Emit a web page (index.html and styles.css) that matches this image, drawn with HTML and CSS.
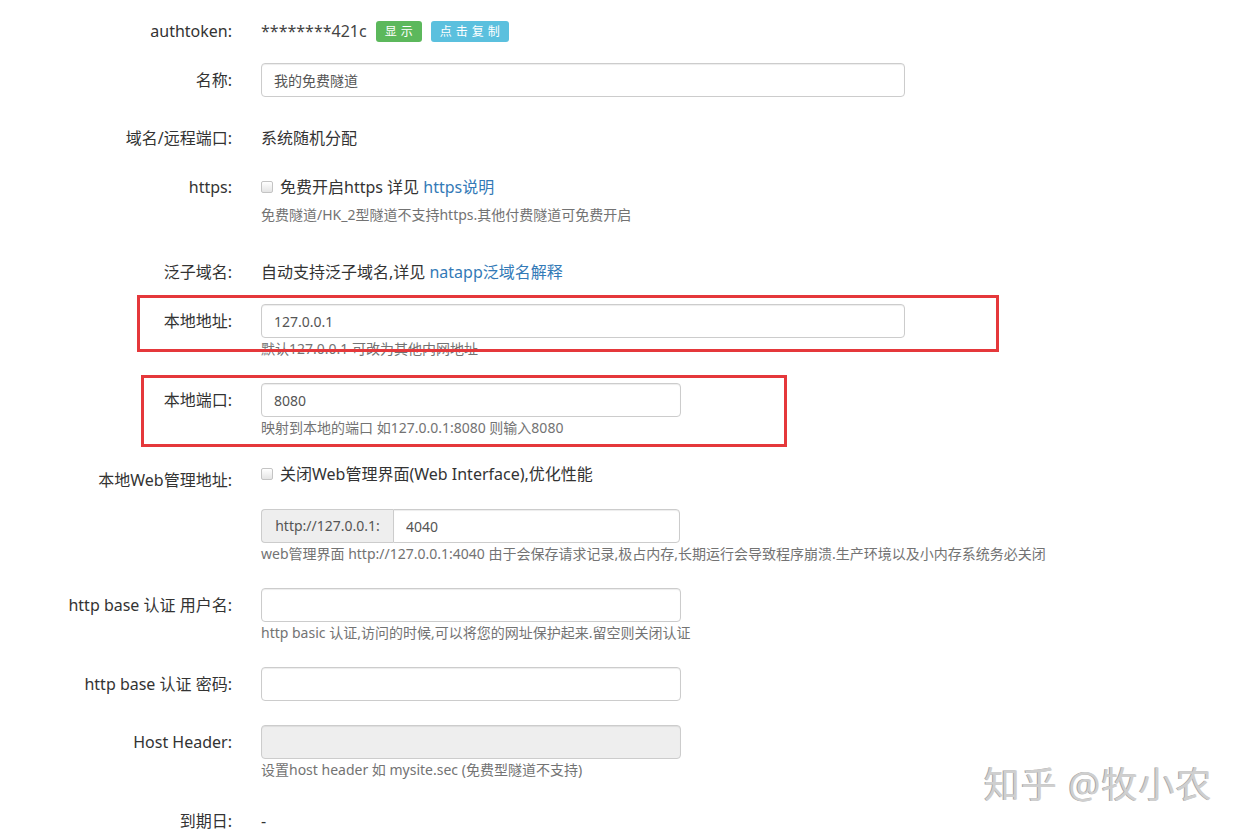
FILE: index.html
```html
<!DOCTYPE html>
<html>
<head>
  <title>隧道配置</title>
  <meta name="viewport" content="width=device-width, initial-scale=1.0">
  <link rel="stylesheet" href="styles.css">
</head>
<body>
  <div class="page">
    <form class="tunnel-form">
      <div class="form-group tight">
        <label class="control-label">authtoken:</label>
        <div class="controls static">
          <span class="token">********421c</span>
          <button type="button" class="btn btn-success">显示</button>
          <button type="button" class="btn btn-info">点击复制</button>
        </div>
      </div>

      <div class="form-group">
        <label class="control-label">名称:</label>
        <div class="controls">
          <input class="form-control wide" type="text" value="我的免费隧道">
        </div>
      </div>

      <div class="form-group tight">
        <label class="control-label">域名/远程端口:</label>
        <div class="controls static">系统随机分配</div>
      </div>

      <div class="form-group loose">
        <label class="control-label">https:</label>
        <div class="controls">
          <div class="static"><span class="check-box"></span>免费开启https 详见&nbsp;<a href="#">https说明</a></div>
          <p class="help-block">免费隧道/HK_2型隧道不支持https.其他付费隧道可免费开启</p>
        </div>
      </div>

      <div class="form-group tight">
        <label class="control-label">泛子域名:</label>
        <div class="controls static">自动支持泛子域名,详见&nbsp;<a href="#">natapp泛域名解释</a></div>
      </div>

      <div class="form-group">
        <label class="control-label">本地地址:</label>
        <div class="controls">
          <input class="form-control wide" type="text" value="127.0.0.1">
          <p class="help-block">默认127.0.0.1 可改为其他内网地址</p>
        </div>
        <div class="mark mark-addr"></div>
      </div>

      <div class="form-group mid">
        <label class="control-label">本地端口:</label>
        <div class="controls">
          <input class="form-control short" type="text" value="8080">
          <p class="help-block">映射到本地的端口 如127.0.0.1:8080 则输入8080</p>
        </div>
        <div class="mark mark-port"></div>
      </div>

      <div class="form-group snug">
        <label class="control-label lower">本地Web管理地址:</label>
        <div class="controls static"><span class="check-box"></span>关闭Web管理界面(Web Interface),优化性能</div>
      </div>

      <div class="form-group">
        <label class="control-label"></label>
        <div class="controls">
          <div class="input-group">
            <span class="input-addon">http://127.0.0.1:</span>
            <input class="form-control" type="text" value="4040">
          </div>
          <p class="help-block">web管理界面 http://127.0.0.1:4040 由于会保存请求记录,极占内存,长期运行会导致程序崩溃.生产环境以及小内存系统务必关闭</p>
        </div>
      </div>

      <div class="form-group">
        <label class="control-label">http base 认证 用户名:</label>
        <div class="controls">
          <input class="form-control short" type="text">
          <p class="help-block">http basic 认证,访问的时候,可以将您的网址保护起来.留空则关闭认证</p>
        </div>
      </div>

      <div class="form-group">
        <label class="control-label">http base 认证 密码:</label>
        <div class="controls">
          <input class="form-control short" type="password">
        </div>
      </div>

      <div class="form-group">
        <label class="control-label">Host Header:</label>
        <div class="controls">
          <input class="form-control short" type="text" disabled>
          <p class="help-block">设置host header 如 mysite.sec (免费型隧道不支持)</p>
        </div>
      </div>

      <div class="form-group">
        <label class="control-label">到期日:</label>
        <div class="controls static">-</div>
      </div>
    </form>

    <div class="watermark">知乎 @牧小农</div>
  </div>
</body>
</html>
```

FILE: styles.css
```css
html, body {
  margin: 0;
  padding: 0;
  overflow: hidden;
}

body {
  font-family: "Noto Sans", "Noto Sans CJK SC", sans-serif;
  font-size: 16px;
  color: #333333;
  background-color: #ffffff;
}

.page {
  position: relative;
  height: 829px;
}

.tunnel-form {
  padding-top: 14px;
}

.form-group {
  display: flex;
  position: relative;
  margin-bottom: 24px;
}

.form-group.tight {
  margin-bottom: 15px;
}

.form-group.mid {
  margin-bottom: 19px;
}

.form-group.snug {
  margin-bottom: 18px;
}

.form-group.loose {
  margin-bottom: 30px;
}

.control-label {
  flex-shrink: 0;
  width: 232px;
  text-align: right;
  line-height: 34px;
  white-space: nowrap;
}

.control-label.lower {
  padding-top: 6px;
  margin-bottom: -6px;
}

.controls {
  margin-left: 29px;
}

.static {
  display: flex;
  align-items: center;
  line-height: 34px;
  height: 34px;
  white-space: nowrap;
}

a {
  color: #337ab7;
  text-decoration: none;
}

.token {
  margin-right: 9px;
  color: #444444;
}

.btn {
  height: 21px;
  padding: 0 5px 0 9px;
  border: none;
  border-radius: 3px;
  color: #ffffff;
  font-family: inherit;
  font-size: 12px;
  letter-spacing: 4px;
  line-height: 21px;
  cursor: pointer;
}

.btn-success {
  background-color: #5cb85c;
  margin-right: 9px;
}

.btn-info {
  background-color: #5bc0de;
}

.check-box {
  display: inline-block;
  width: 10px;
  height: 10px;
  margin-right: 7px;
  border: 1px solid #c4c4c4;
  border-radius: 2px;
  background: linear-gradient(#ffffff, #e4e4e4);
}

.form-control {
  display: block;
  box-sizing: border-box;
  height: 34px;
  padding: 6px 12px;
  border: 1px solid #cccccc;
  border-radius: 4px;
  box-shadow: inset 0 1px 1px rgba(0, 0, 0, 0.075);
  font-family: inherit;
  font-size: 14px;
  color: #555555;
  background-color: #ffffff;
}

.form-control.wide {
  width: 644px;
}

.form-control.short {
  width: 420px;
}

.form-control:disabled {
  background-color: #eeeeee;
}

.input-group {
  display: flex;
  width: 419px;
}

.input-group .form-control {
  flex: 1;
  border-radius: 0 4px 4px 0;
}

.input-addon {
  box-sizing: border-box;
  width: 132px;
  height: 34px;
  line-height: 32px;
  text-align: center;
  font-size: 14px;
  color: #555555;
  background-color: #eeeeee;
  border: 1px solid #cccccc;
  border-right: none;
  border-radius: 4px 0 0 4px;
}

.help-block {
  margin: 1px 0 0;
  font-size: 14px;
  line-height: 20px;
  color: #737373;
  white-space: nowrap;
}

/* red annotation frames drawn over the form */
.mark {
  position: absolute;
  box-sizing: border-box;
  border: 3px solid #e5383b;
}

.mark-addr {
  left: 137px;
  top: -9px;
  width: 862px;
  height: 57px;
}

.mark-port {
  left: 141px;
  top: -8px;
  width: 646px;
  height: 72px;
}

.watermark {
  position: absolute;
  left: 984px;
  top: 756px;
  font-size: 36px;
  letter-spacing: 1px;
  color: #cfcfcf;
  text-shadow: -1px 0 0 #a6a6a6;
  white-space: nowrap;
}
```
